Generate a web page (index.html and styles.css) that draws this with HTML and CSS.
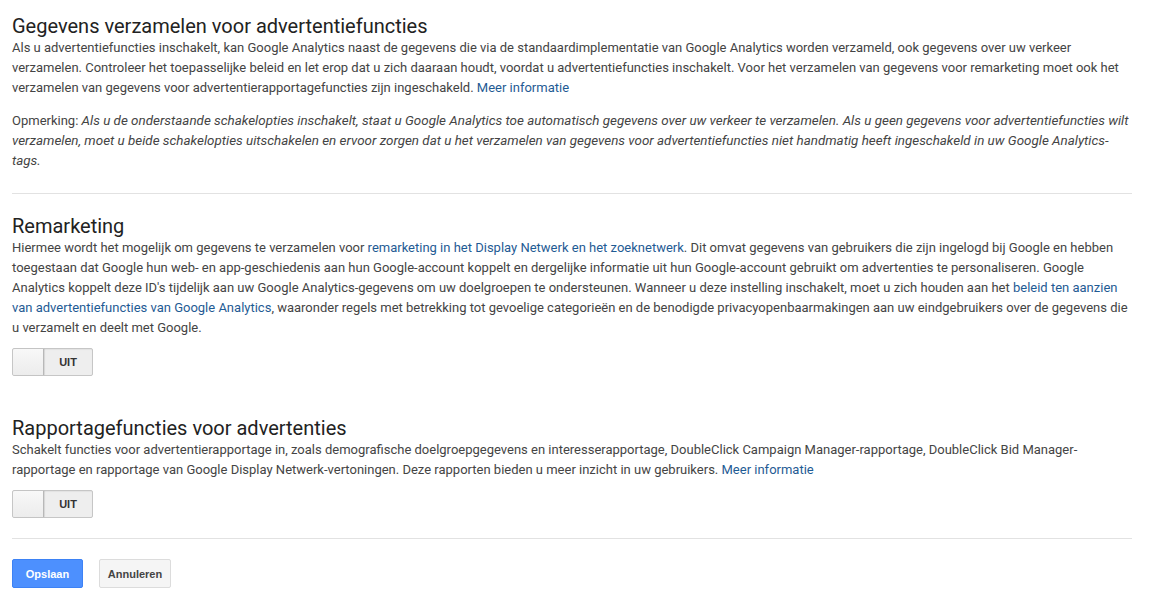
FILE: index.html
```html
<!DOCTYPE html>
<html lang="nl">
<head>
    <meta charset="UTF-8">
    <title>Gegevens verzamelen</title>
    <link rel="stylesheet" href="styles.css">
</head>
<body>
    <div class="page">
        <div class="section">
            <h2 class="title">Gegevens verzamelen voor advertentiefuncties</h2>
            <p class="text">Als u advertentiefuncties inschakelt, kan Google Analytics naast de gegevens die via de standaardimplementatie van Google Analytics worden verzameld, ook gegevens over uw verkeer verzamelen. Controleer het toepasselijke beleid en let erop dat u zich daaraan houdt, voordat u advertentiefuncties inschakelt. Voor het verzamelen van gegevens voor remarketing moet ook het verzamelen van gegevens voor advertentierapportagefuncties zijn ingeschakeld. <a href="#">Meer informatie</a></p>
            <p class="text note">Opmerking: <em>Als u de onderstaande schakelopties inschakelt, staat u Google Analytics toe automatisch gegevens over uw verkeer te verzamelen. Als u geen gegevens voor advertentiefuncties wilt verzamelen, moet u beide schakelopties uitschakelen en ervoor zorgen dat u het verzamelen van gegevens voor advertentiefuncties niet handmatig heeft ingeschakeld in uw Google Analytics-tags.</em></p>
        </div>

        <div class="divider"></div>

        <div class="section">
            <h2 class="title">Remarketing</h2>
            <p class="text">Hiermee wordt het mogelijk om gegevens te verzamelen voor <a href="#">remarketing in het Display Netwerk en het zoeknetwerk</a>. Dit omvat gegevens van gebruikers die zijn ingelogd bij Google en hebben toegestaan dat Google hun web- en app-geschiedenis aan hun Google-account koppelt en dergelijke informatie uit hun Google-account gebruikt om advertenties te personaliseren. Google Analytics koppelt deze ID's tijdelijk aan uw Google Analytics-gegevens om uw doelgroepen te ondersteunen. Wanneer u deze instelling inschakelt, moet u zich houden aan het <a href="#">beleid ten aanzien van advertentiefuncties van Google Analytics</a>, waaronder regels met betrekking tot gevoelige categorieën en de benodigde privacyopenbaarmakingen aan uw eindgebruikers over de gegevens die u verzamelt en deelt met Google.</p>
            <div class="toggle">
                <span class="knob"></span>
                <span class="toggle-label">UIT</span>
            </div>
        </div>

        <div class="section section-gap">
            <h2 class="title">Rapportagefuncties voor advertenties</h2>
            <p class="text">Schakelt functies voor advertentierapportage in, zoals demografische doelgroepgegevens en interesserapportage, DoubleClick Campaign Manager-rapportage, DoubleClick Bid Manager-rapportage en rapportage van Google Display Netwerk-vertoningen. Deze rapporten bieden u meer inzicht in uw gebruikers. <a href="#">Meer informatie</a></p>
            <div class="toggle">
                <span class="knob"></span>
                <span class="toggle-label">UIT</span>
            </div>
        </div>

        <div class="divider divider-bottom"></div>

        <div class="actions">
            <button class="btn btn-primary">Opslaan</button>
            <button class="btn">Annuleren</button>
        </div>
    </div>
</body>
</html>
```

FILE: styles.css
```css
* {
    box-sizing: border-box;
    margin: 0;
    padding: 0;
}

body {
    background: #fff;
    font-family: Roboto, "Liberation Sans", Arial, sans-serif;
    color: #333;
}

.page {
    width: 1132px;
    padding: 14px 0 0 12px;
}

.title {
    font-size: 20px;
    font-weight: 400;
    line-height: 24px;
    color: #222;
}

.text {
    font-size: 13px;
    line-height: 20px;
    color: #444;
}

.text a {
    color: #1f5b94;
    text-decoration: none;
}

.note {
    margin-top: 13px;
}

.note em {
    font-style: italic;
    font-size: 13.4px;
}

.divider {
    height: 1px;
    background: #e2e2e2;
    margin: 22px 0 20px;
}

.divider-bottom {
    margin: 20px 0 20px;
}

.section-gap {
    margin-top: 40px;
}

.toggle {
    display: flex;
    width: 81px;
    height: 28px;
    margin-top: 10px;
    border: 1px solid #c6c6c6;
    border-radius: 2px;
    background: #eee;
    box-shadow: inset 0 1px 1px rgba(0, 0, 0, 0.05);
}

.knob {
    width: 31px;
    height: 100%;
    background: linear-gradient(#f8f8f8, #ececec);
    border-right: 1px solid #b8b8b8;
    border-radius: 2px 0 0 2px;
    box-shadow: 1px 0 1px rgba(0, 0, 0, 0.1);
}

.toggle-label {
    flex: 1;
    display: flex;
    align-items: center;
    justify-content: center;
    font-family: "Liberation Sans", Arial, sans-serif;
    font-size: 11px;
    font-weight: 700;
    color: #333;
}

.actions {
    display: flex;
    gap: 16px;
}

.btn {
    height: 29px;
    width: 72px;
    padding: 0;
    border: 1px solid #dcdcdc;
    border-radius: 2px;
    background: #f5f5f5;
    font-family: "Liberation Sans", Arial, sans-serif;
    font-size: 11px;
    font-weight: 700;
    color: #444;
}

.btn-primary {
    width: 71px;
    background: #4d90fe;
    border-color: #3d82f5;
    color: #fff;
}
```
